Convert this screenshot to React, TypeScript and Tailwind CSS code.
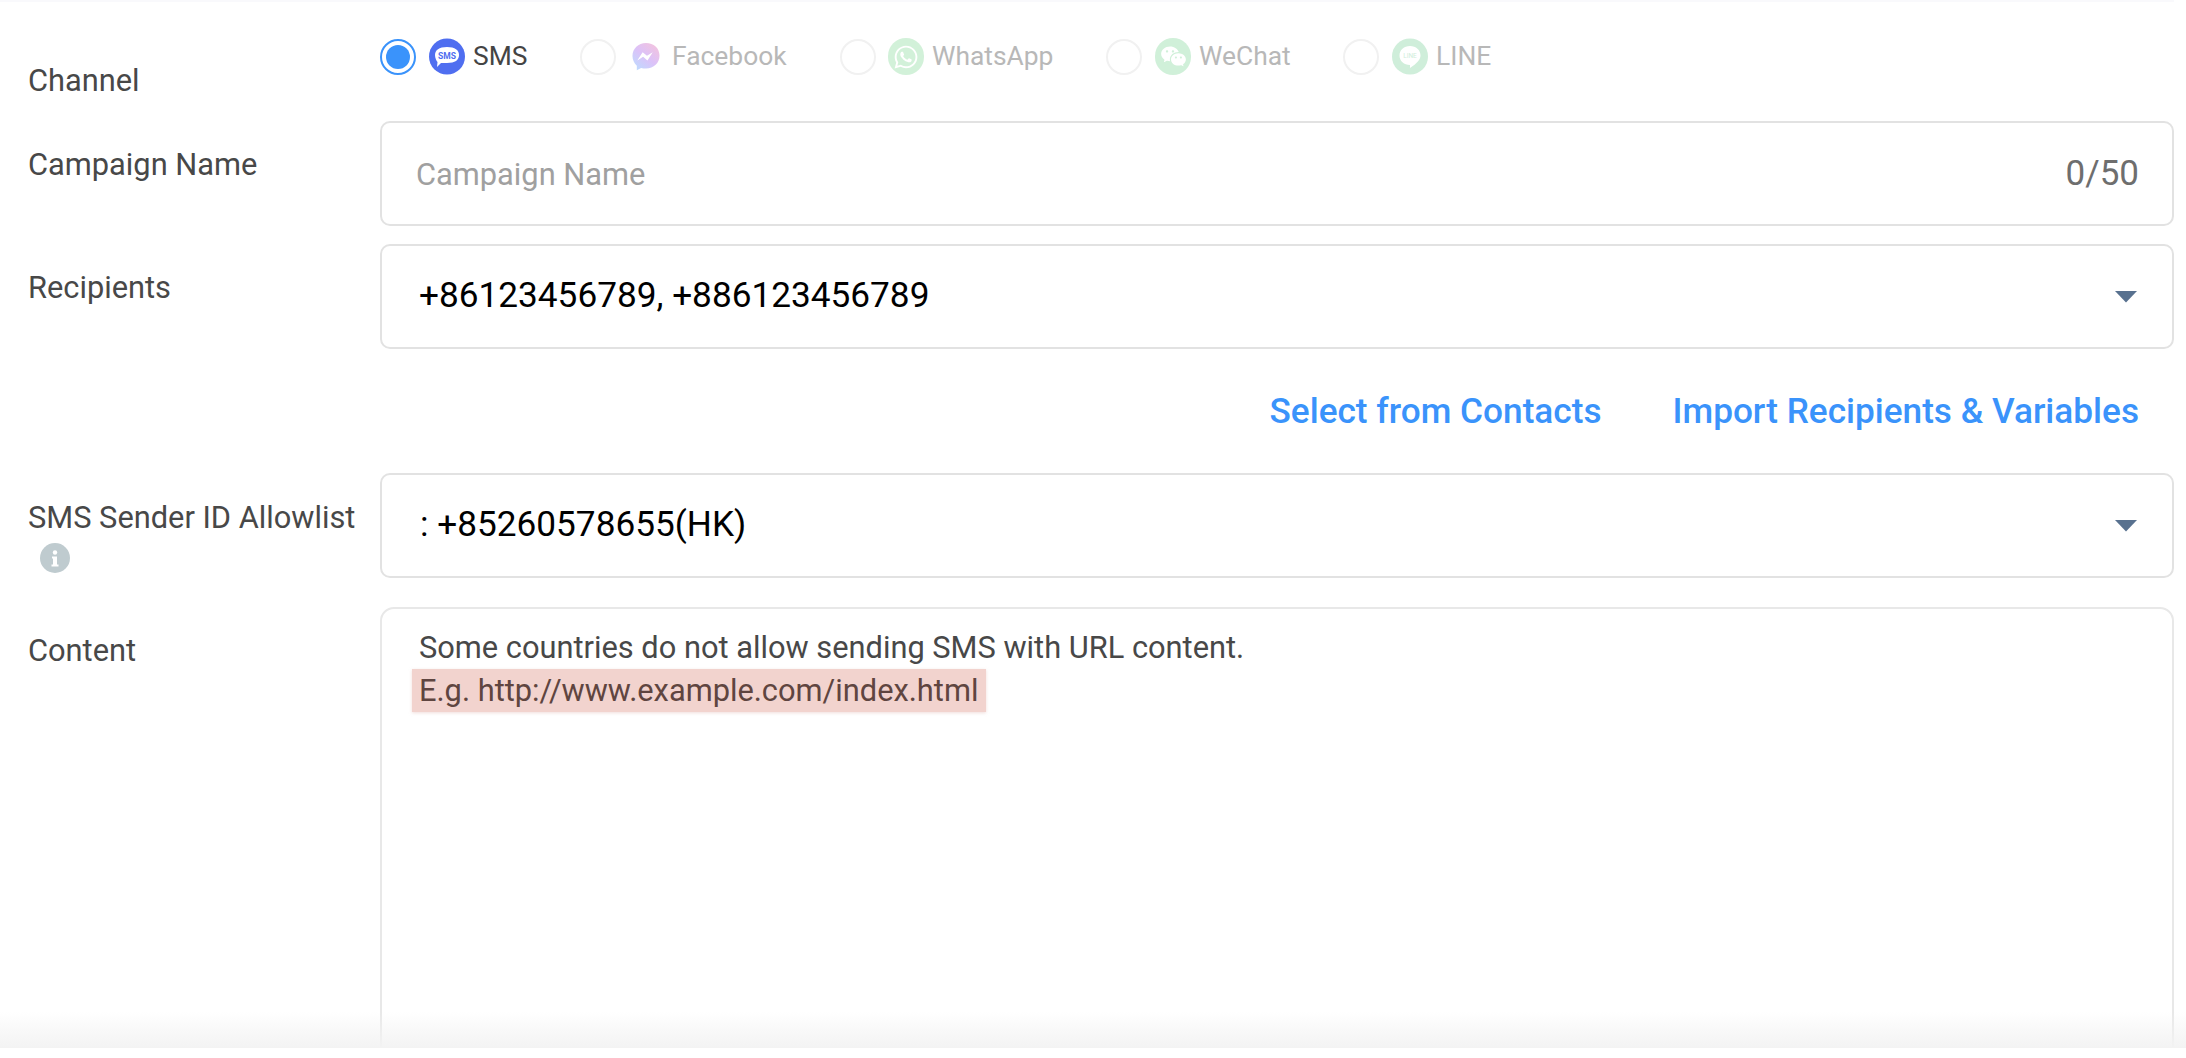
import React from "react";
import { FaWhatsapp } from "react-icons/fa";
import { RiWechatFill } from "react-icons/ri";

function Radio({ on }: { on?: boolean }) {
  return on ? (
    <span className="flex h-[36px] w-[36px] items-center justify-center rounded-full border-2 border-[#3a93fb]">
      <span className="h-[24px] w-[24px] rounded-full bg-[#3a93fb]" />
    </span>
  ) : (
    <span className="block h-[36px] w-[36px] rounded-full border-2 border-[#f1f1f1]" />
  );
}

function SmsIcon() {
  return (
    <svg width="36" height="37" viewBox="0 0 36 37">
      <circle cx="18" cy="18.5" r="18" fill="#4f6ef0" />
      <path d="M6 17c0-5 4-8 12-8s12 3 12 8-4 8-12 8h-6l-4 4 .5-5C7.500 23 6 20 6 17z" fill="#fff" />
      <text x="18" y="20.500" textAnchor="middle" fontSize="8.500" fontWeight="700" fill="#4f6ef0" fontFamily="Roboto, sans-serif">SMS</text>
    </svg>
  );
}

function LineIcon() {
  return (
    <svg width="36" height="37" viewBox="0 0 36 37">
      <circle cx="18" cy="18.500" r="18" fill="#cfeeda" />
      <path d="M18 8c6 0 10.500 4 10.500 9.500 0 4-3.500 8-10.500 12.500v-3C12 27 7.500 23 7.500 17.500 7.500 12 12 8 18 8z" fill="#fff" />
      <text x="18" y="20" textAnchor="middle" fontSize="6.500" fill="#cfeeda" fontFamily="Roboto, sans-serif">LINE</text>
    </svg>
  );
}

function Option({ on, icon, label, className }: { on?: boolean; icon: React.ReactNode; label: string; className: string }) {
  return (
    <div className={`flex items-center ${className}`}>
      <Radio on={on} />
      <span className="ml-[13px] flex items-center">{icon}</span>
      <span className={`ml-[8px] text-[26.4px] ${on ? "text-[#444444]" : "text-[#b8b8b8]"}`}>{label}</span>
    </div>
  );
}

function Caret() {
  return (
    <svg width="24" height="13" viewBox="0 0 24 13" className="shrink-0">
      <path d="M1 1h22L12 12.500z" fill="#58718f" />
    </svg>
  );
}

function Row({ label, children, className }: { label: React.ReactNode; children: React.ReactNode; className?: string }) {
  return (
    <div className={`flex ${className ?? ""}`}>
      <div className="w-[380px] shrink-0 pl-[28px] text-[30.8px] leading-[40px] text-[#484848]">{label}</div>
      <div className="min-w-0 flex-1">{children}</div>
    </div>
  );
}

const box = "flex h-[105px] items-center rounded-[10px] border-2 border-[#e2e2e2]";

export default function App() {
  return (
    <div className="relative h-[1058px] overflow-hidden bg-white pr-[12px] font-['Roboto',sans-serif]">
      <div className="h-[2px] bg-[#f9f9fc]" />
      <Row label={<div className="pt-[59px]">Channel</div>} className="h-[119px]">
        <div className="flex pt-[35px]">
          <Option on label="SMS" className="w-[200px]" icon={<SmsIcon />} />
          <Option
            label="Facebook"
            className="w-[260px]"
            icon={
              <span className="-ml-[1px] block h-[36px] w-[36px] p-[4px]">
                <svg width="28" height="28" viewBox="0 0 28 29">
                  <defs>
                    <linearGradient id="ms" x1="0.900" y1="0" x2="0.100" y2="1">
                      <stop offset="0" stopColor="#f5c3dc" />
                      <stop offset="0.500" stopColor="#dcc2f8" />
                      <stop offset="1" stopColor="#bcdcff" />
                    </linearGradient>
                  </defs>
                  <path d="M14 0C6 0 0 5.800 0 13.500c0 4 1.700 7.500 4.500 10v4.700l4.400-2.400c1.600.5 3.300.7 5.100.7 8 0 14-5.800 14-13.500S22 0 14 0z" fill="url(#ms)" />
                  <path d="M5 18 10.500 9.500l4.500 3.700 6-3.700-5.500 8.500-4.500-3.700z" fill="#fff" />
                </svg>
              </span>
            }
          />
          <Option
            label="WhatsApp"
            className="w-[266px]"
            icon={
              <span className="-ml-[1px] flex h-[37px] w-[36px] items-center justify-center rounded-full bg-[#d2f1d9] text-white">
                <FaWhatsapp size={26} />
              </span>
            }
          />
          <Option
            label="WeChat"
            className="w-[237px]"
            icon={
              <span className="flex h-[37px] w-[36px] items-center justify-center rounded-full bg-[#d0f0d9] text-white">
                <RiWechatFill size={27} />
              </span>
            }
          />
          <Option label="LINE" className="w-[160px]" icon={<LineIcon />} />
        </div>
      </Row>

      <Row label={<div className="pt-[24px]">Campaign Name</div>}>
        <div className={`${box} justify-between pl-[34px] pr-[33px]`}>
          <span className="translate-y-[2px] text-[30.8px] text-[#a0a0a0]">Campaign Name</span>
          <span className="translate-y-[1px] text-[35px] text-[#6e6e6e]">0/50</span>
        </div>
      </Row>

      <Row label={<div className="pt-[24px]">Recipients</div>} className="mt-[18px]">
        <div className={`${box} justify-between pl-[37px] pr-[34px]`}>
          <span className="-translate-y-[1px] text-[35.2px] text-black">+86123456789, +886123456789</span>
          <Caret />
        </div>
      </Row>

      <div className="flex h-[124px] items-center justify-end gap-[71px] pr-[35px] text-[35.2px] font-medium text-[#3a93fb]">
        <span>Select from Contacts</span>
        <span>Import Recipients &amp; Variables</span>
      </div>

      <Row
        label={
          <div className="pt-[22px] leading-[46px]">
            <div>SMS Sender ID Allowlist</div>
            <span className="ml-[12px] mt-[2px] flex h-[30px] w-[30px] items-center justify-center rounded-full bg-[#bfcbcf]">
              <svg width="8" height="17" viewBox="0 0 8 17">
                <circle cx="4" cy="2.500" r="2.200" fill="#fff" />
                <path d="M1 6.500h5v8h1.500v2H.500v-2H2v-6H1z" fill="#fff" />
              </svg>
            </span>
          </div>
        }
      >
        <div className={`${box} justify-between pl-[38px] pr-[34px]`}>
          <span className="-translate-y-[1px] text-[35.2px] text-black">: +85260578655(HK)</span>
          <Caret />
        </div>
      </Row>

      <Row label={<div className="pt-[24px]">Content</div>} className="mt-[29px]">
        <div className="h-[500px] rounded-t-[14px] border-2 border-[#e8e8e8] pl-[30px] pt-[17px] text-[30.8px] leading-[43px] text-[#484848]">
          <div className="pl-[7px]">Some countries do not allow sending SMS with URL content.</div>
          <div className="w-fit bg-[#f2d3ce] pl-[7px] pr-[8px] text-[#5f4540] shadow-[0_1px_3px_rgba(230,190,185,0.5)]">E.g. http://www.example.com/index.html</div>
        </div>
      </Row>

      <div className="absolute bottom-0 left-0 h-[10px] w-full bg-white" />
      <div className="absolute bottom-[10px] left-0 h-[36px] w-full bg-gradient-to-b from-transparent to-[#f3f3f3]" />
    </div>
  );
}
